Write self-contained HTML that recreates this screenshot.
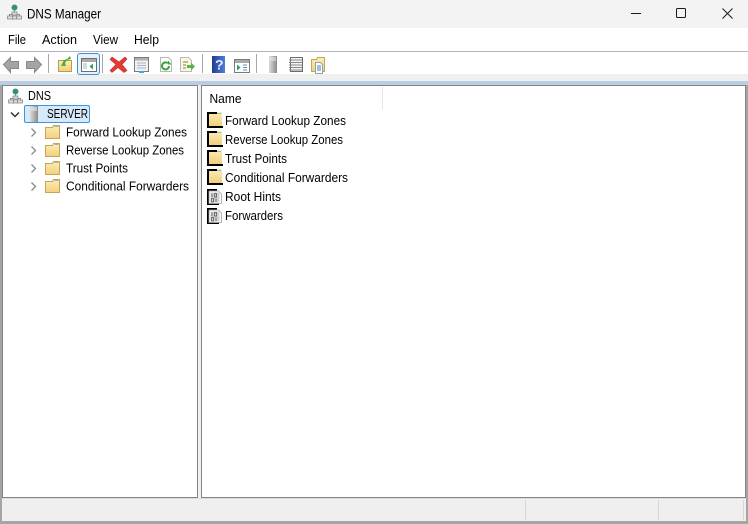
<!DOCTYPE html>
<html><head><meta charset="utf-8"><title>DNS Manager</title>
<style>html,body{margin:0;padding:0;background:#fff;width:748px;height:524px;overflow:hidden}
svg{display:block}
text{font-family:"Liberation Sans",sans-serif;font-size:13px;fill:#000}
</style></head><body>
<svg width="748" height="524" viewBox="0 0 748 524" xmlns="http://www.w3.org/2000/svg">
<defs>
<linearGradient id="fg" x1="0" y1="0" x2="0" y2="1"><stop offset="0" stop-color="#fbeeb8"/><stop offset="1" stop-color="#f3cf7c"/></linearGradient>
<linearGradient id="srv" x1="0" y1="0" x2="1" y2="0"><stop offset="0" stop-color="#dcdcdc"/><stop offset="1" stop-color="#8a8a8a"/></linearGradient>
<linearGradient id="hlp" x1="0" y1="0" x2="1" y2="0"><stop offset="0" stop-color="#1f3d8f"/><stop offset="1" stop-color="#4f7fd8"/></linearGradient>
<g id="folder"><path d="M.5 3.500V14.500H14.500V1.500H8.500L7.500 3.500Z" fill="url(#fg)" stroke="#c9a557"/><path d="M9.500 2.500h4" stroke="#8ab8dc"/></g>
<g id="bfolder"><rect x="0" y="0" width="16" height="16" fill="#000"/><path d="M2 2H10V0H16V14H2Z" fill="url(#fg)"/><rect x="15" y="0" width="1" height="14" fill="#fff"/><path d="M10 1.500h4" stroke="#8ab8dc"/></g>
<g id="bin"><path d="M0 0h10v2H2v14H0z" fill="#000"/><rect x="0" y="14.500" width="12" height="1.500" fill="#000"/><path d="M2 2H11.500L14.500 5V14.500H2Z" fill="#fff" stroke="#a0a0a0" stroke-width=".8"/><rect x="3.500" y="3.500" width="9" height="10" fill="#d2d2d2"/><path d="M5 4.500v3.500M7.500 4.500h2v3.500h-2zM4.500 9.500h2v3.500h-2zM9 9.500v3.500" stroke="#6f6f6f" fill="none"/></g>
<g id="net"><circle cx="7.500" cy="3.500" r="3" fill="#3d9a55"/><path d="M5.500 2.500h4l-1 2h-2z" fill="#2f78c9"/><path d="M7.500 6.500V10M2.500 13V10.500H12.500V13" fill="none" stroke="#8a8a8a"/><rect x="5" y="8" width="5" height="3" fill="#d8d8e0" stroke="#8a8a8a" stroke-width=".8"/><rect x=".5" y="12" width="5" height="3" fill="#e0e0e6" stroke="#8a8a8a" stroke-width=".8"/><rect x="5.500" y="12" width="4" height="3" fill="#e0e0e6" stroke="#8a8a8a" stroke-width=".8"/><rect x="9.500" y="12" width="5" height="3" fill="#e0e0e6" stroke="#8a8a8a" stroke-width=".8"/></g>
</defs>

<!-- frame backgrounds -->
<rect width="748" height="524" fill="#f0f0f0"/>
<rect x="0" y="0" width="748" height="28" fill="#f3f3f3"/>
<rect x="0" y="28" width="748" height="23" fill="#fff"/>
<rect x="0" y="51" width="748" height="1" fill="#b4b4bf"/>
<rect x="0" y="52" width="748" height="22" fill="#fff"/>
<rect x="0" y="74" width="748" height="7" fill="#f0f0f0"/>
<rect x="0" y="81" width="748" height="4" fill="#b9cde3"/>

<!-- title bar -->
<use href="#net" x="7" y="4"/>
<text x="27" y="18.500" style="font-size:14px" textLength="74" lengthAdjust="spacingAndGlyphs">DNS Manager</text>
<path d="M631 13.500H641" stroke="#1a1a1a" stroke-width="1"/>
<rect x="676.500" y="8.500" width="9" height="9" rx="1" fill="none" stroke="#1a1a1a"/>
<path d="M722.500 8.500l10 10M732.500 8.500l-10 10" stroke="#1a1a1a" stroke-width="1" fill="none"/>

<!-- menu -->
<text x="8" y="44" textLength="18" lengthAdjust="spacingAndGlyphs">File</text>
<text x="42" y="44" textLength="35" lengthAdjust="spacingAndGlyphs">Action</text>
<text x="93" y="44" textLength="25" lengthAdjust="spacingAndGlyphs">View</text>
<text x="134" y="44" textLength="25" lengthAdjust="spacingAndGlyphs">Help</text>

<!-- toolbar -->
<path d="M3.500 64.500l7-7v4h8v7h-8v4z" fill="#a4a4a4" stroke="#8a8a8a"/>
<path d="M41.500 64.500l-7-7v4h-8v7h8v4z" fill="#a4a4a4" stroke="#8a8a8a"/>
<rect x="48" y="54" width="1" height="19" fill="#a8a8a8"/>
<path d="M58.500 60.500H71.500V71.500H58.500Z" fill="url(#fg)" stroke="#bd9a50"/>
<path d="M61 66l3-6 3-1 3-3 1 3-4 1-2 3 1 3z" fill="#4caf3c"/>
<rect x="77.500" y="53.500" width="22" height="21" rx="2.500" fill="#e6f1fb" stroke="#3f8fd8"/>
<rect x="81.500" y="58.500" width="15" height="13" fill="#fff" stroke="#6d6d6d"/>
<rect x="82" y="59" width="14" height="3" fill="#a9a9a9"/>
<path d="M83 64h4M83 66h4M83 68h4" stroke="#9cb4cc"/>
<path d="M93 63.500v6l-3.500-3z" fill="#2aa05a"/>
<rect x="102" y="54" width="1" height="19" fill="#a8a8a8"/>
<path d="M112 57l7 5 6-5 2 2-5 5.500 5 6-3 2-6-5-6 5-2-2 6-6-6-5z" fill="#e23b36" stroke="#c62c28" stroke-width=".6"/>
<rect x="134.500" y="57.500" width="14" height="14" fill="#eef0f3" stroke="#7b7b7b"/>
<rect x="135" y="58" width="13" height="2.500" fill="#b0b0b0"/>
<path d="M137 63h9M137 65.500h9M137 68h9" stroke="#a8b8c8"/>
<rect x="139" y="71" width="5" height="2" fill="#39a9dc"/>
<path d="M160.500 57.500H168.500L171.500 60.500V71.500H160.500Z" fill="#fff" stroke="#b8b8b8"/>
<path d="M169 66a3.500 3.500 0 1 1-1.200-2.700" fill="none" stroke="#3ba43b" stroke-width="2"/>
<path d="M168 60.500v4h3.500z" fill="#3ba43b"/>
<path d="M180.500 57.500H188.500L191.500 60.500V71.500H180.500Z" fill="#fdf8dc" stroke="#b8b8b8"/>
<path d="M183 62h5M183 65h3M183 68h3" stroke="#777"/>
<path d="M187 65h4v-2.500l4 4-4 4V68h-4z" fill="#52b848"/>
<rect x="202" y="54" width="1" height="19" fill="#a8a8a8"/>
<rect x="212" y="56" width="13" height="17" fill="url(#hlp)"/>
<text x="215" y="69.500" style="font-size:14px;font-weight:bold;fill:#e8eeff">?</text>
<rect x="234.500" y="59.500" width="15" height="13" fill="#fff" stroke="#7a7a7a"/>
<rect x="235" y="60" width="14" height="3" fill="#a9a9a9"/>
<path d="M237 64.500v6l3.500-3z" fill="#2aa05a"/>
<path d="M243 65h4M243 67.500h4M243 70h4" stroke="#5f8fc0"/>
<rect x="256" y="54" width="1" height="19" fill="#a8a8a8"/>
<rect x="269" y="56" width="8" height="17" fill="url(#srv)"/>
<path d="M270 58h6M270 60h6" stroke="#f0f0f0"/>
<rect x="290.500" y="57.500" width="12" height="14" fill="#f3f3f3" stroke="#6c6c6c"/>
<path d="M289 60h13M289 62.500h13M289 65h13M289 67.500h13M289 70h13" stroke="#8a8a8a"/>
<path d="M311.500 60.500V71.500H324.500V57.500H317.500L316.500 59.500H311.500Z" fill="url(#fg)" stroke="#c9a557"/>
<path d="M315.500 62.500H320.500L322.500 64.500V73.500H315.500Z" fill="#fff" stroke="#8aa"/>
<path d="M317 66h4M317 68h4M317 70h4" stroke="#3f7fc0"/>

<!-- panels -->
<rect x="0" y="85" width="2" height="439" fill="#a5a5a5"/>
<rect x="746" y="85" width="2" height="439" fill="#a5a5a5"/>
<rect x="2" y="85" width="196" height="413" fill="#fff"/>
<rect x="2.500" y="85.500" width="195" height="412" fill="#fff" stroke="#82838a"/>
<rect x="201.500" y="85.500" width="544" height="412" fill="#fff" stroke="#82838a"/>

<!-- tree -->
<use href="#net" x="8" y="88"/>
<text x="28" y="100" textLength="23" lengthAdjust="spacingAndGlyphs">DNS</text>
<path d="M11 112.500l4 4 4-4" fill="none" stroke="#333" stroke-width="1.500"/>
<rect x="24.500" y="105.500" width="65" height="17" rx="1.500" fill="#d5e9fa" stroke="#3f94de"/>
<rect x="30" y="106" width="8" height="16" fill="url(#srv)"/>
<path d="M31 108h6M31 110h6" stroke="#f0f0f0"/>
<rect x="34" y="120" width="2" height="1" fill="#6ccf5a"/>
<text x="47" y="118" textLength="41" lengthAdjust="spacingAndGlyphs">SERVER</text>

<path d="M31.500 128.500l4 4-4 4M31.500 146.500l4 4-4 4M31.500 164.500l4 4-4 4M31.500 182.500l4 4-4 4" fill="none" stroke="#8c8c8c" stroke-width="1.300"/>
<use href="#folder" x="45" y="124"/>
<use href="#folder" x="45" y="142"/>
<use href="#folder" x="45" y="160"/>
<use href="#folder" x="45" y="178"/>
<text x="66" y="136.500" textLength="121" lengthAdjust="spacingAndGlyphs">Forward Lookup Zones</text>
<text x="66" y="154.500" textLength="118" lengthAdjust="spacingAndGlyphs">Reverse Lookup Zones</text>
<text x="66" y="172.500" textLength="62" lengthAdjust="spacingAndGlyphs">Trust Points</text>
<text x="66" y="190.500" textLength="123" lengthAdjust="spacingAndGlyphs">Conditional Forwarders</text>

<!-- list -->
<text x="209.500" y="103" textLength="32" lengthAdjust="spacingAndGlyphs">Name</text>
<rect x="382" y="87" width="1" height="23" fill="#e5e5e5"/>
<use href="#bfolder" x="207" y="112"/>
<use href="#bfolder" x="207" y="131"/>
<use href="#bfolder" x="207" y="150"/>
<use href="#bfolder" x="207" y="169"/>
<use href="#bin" x="207" y="189"/>
<use href="#bin" x="207" y="208"/>
<text x="225" y="125" textLength="121" lengthAdjust="spacingAndGlyphs">Forward Lookup Zones</text>
<text x="225" y="144" textLength="118" lengthAdjust="spacingAndGlyphs">Reverse Lookup Zones</text>
<text x="225" y="163" textLength="62" lengthAdjust="spacingAndGlyphs">Trust Points</text>
<text x="225" y="182" textLength="123" lengthAdjust="spacingAndGlyphs">Conditional Forwarders</text>
<text x="225" y="201" textLength="56" lengthAdjust="spacingAndGlyphs">Root Hints</text>
<text x="225" y="220" textLength="58" lengthAdjust="spacingAndGlyphs">Forwarders</text>

<!-- status bar -->
<rect x="2" y="498" width="744" height="23" fill="#efefef"/>
<rect x="2" y="498" width="744" height="1" fill="#dcdcdc"/>
<rect x="525" y="500" width="1" height="20" fill="#d6d6d6"/>
<rect x="658" y="500" width="1" height="20" fill="#d6d6d6"/>
<rect x="743" y="500" width="1" height="20" fill="#d6d6d6"/>
<rect x="0" y="521" width="748" height="3" fill="#a5a5a5"/>
</svg>
</body></html>
